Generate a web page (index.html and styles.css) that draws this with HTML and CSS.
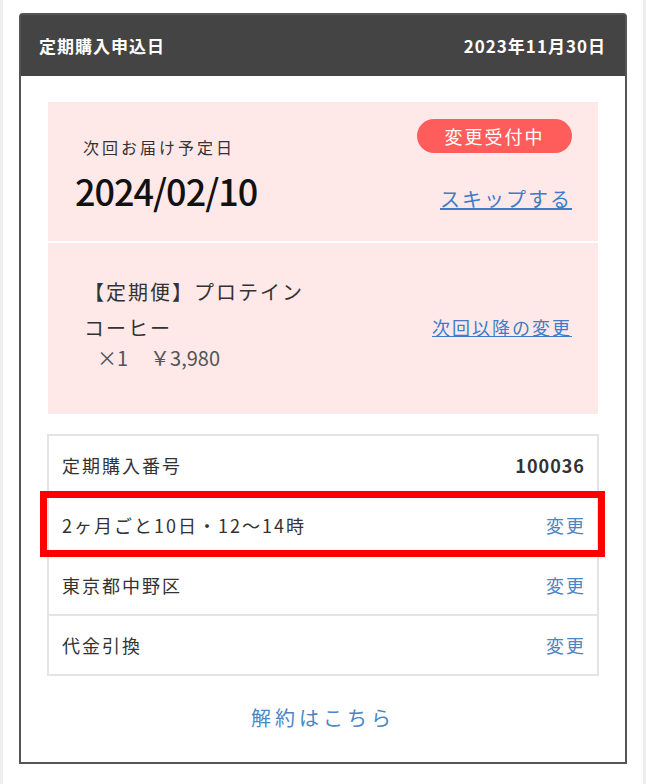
FILE: index.html
```html
<!DOCTYPE html>
<html lang="ja">
<head>
    <meta charset="UTF-8">
    <meta name="viewport" content="width=device-width, initial-scale=1.0">
    <title>定期購入</title>
    <link rel="stylesheet" href="styles.css">
</head>
<body>
    <div class="page">
        <div class="card">
            <div class="card-head">
                <span>定期購入申込日</span>
                <span>2023年11月30日</span>
            </div>
            <div class="card-body">
                <div class="next">
                    <div class="next-main">
                        <p class="next-label">次回お届け予定日</p>
                        <p class="next-date">2024/02/10</p>
                    </div>
                    <div class="next-side">
                        <span class="badge">変更受付中</span>
                        <a class="link" href="#">スキップする</a>
                    </div>
                </div>

                <div class="item">
                    <div class="item-text">
                        <p class="item-name">【定期便】プロテインコーヒー</p>
                        <p class="item-qty">×1<span class="item-price">￥3,980</span></p>
                    </div>
                    <a class="link link-small" href="#">次回以降の変更</a>
                </div>

                <ul class="info">
                    <li><span>定期購入番号</span><b>100036</b></li>
                    <li class="marked"><span>2ヶ月ごと10日・12〜14時</span><a href="#">変更</a></li>
                    <li><span>東京都中野区</span><a href="#">変更</a></li>
                    <li><span>代金引換</span><a href="#">変更</a></li>
                </ul>

                <a class="cancel" href="#">解約はこちら</a>
            </div>
        </div>
    </div>
</body>
</html>
```

FILE: styles.css
```css
body {
    margin: 0;
    font-family: "Noto Sans CJK JP", "Noto Sans", sans-serif;
    color: #333;
    background-color: #fff;
}
p {
    margin: 0;
}
.page {
    min-height: 100vh;
    box-sizing: border-box;
    border-left: 3px solid #eee;
    border-right: 3px solid #eee;
    padding: 13px 16px 0 16px;
}
.card {
    border: 2px solid #555;
    border-radius: 4px 4px 0 0;
}
.card-head {
    display: flex;
    justify-content: space-between;
    align-items: center;
    height: 61px;
    padding: 0 19px 0 18px;
    background-color: #444;
    color: #fff;
    font-size: 17px;
    font-weight: bold;
    letter-spacing: 1px;
}
.card-body {
    padding: 26px 27px 30px 27px;
}
.next {
    display: flex;
    justify-content: space-between;
    height: 139px;
    box-sizing: border-box;
    padding: 17px 26px 0 27px;
    background-color: #ffe8e8;
}
.next-main {
    padding-top: 18px;
}
.next-label {
    padding-left: 8px;
    font-size: 16px;
    line-height: 20px;
    letter-spacing: 3px;
}
.next-date {
    margin-top: 11px;
    font-size: 36px;
    line-height: 44px;
    font-weight: 500;
    letter-spacing: -1px;
    color: #111;
}
.next-side {
    display: flex;
    flex-direction: column;
    align-items: flex-end;
}
.badge {
    display: inline-block;
    width: 155px;
    height: 34px;
    line-height: 34px;
    border-radius: 17px;
    background-color: #ff5c5c;
    color: #fff;
    font-size: 18px;
    letter-spacing: 2px;
    text-align: center;
}
.link {
    margin-top: 32px;
    color: #3d7cc9;
    font-size: 20px;
    line-height: 28px;
    letter-spacing: 2px;
}
.item {
    display: flex;
    justify-content: space-between;
    align-items: center;
    margin-top: 2px;
    padding: 31px 26px 44px 36px;
    background-color: #ffe8e8;
}
.item-text {
    width: 240px;
}
.item-name {
    font-size: 20px;
    line-height: 36px;
    letter-spacing: 2px;
}
.item-qty {
    padding-left: 13px;
    font-size: 20px;
    line-height: 24px;
    color: #555;
}
.item-price {
    margin-left: 22px;
}
.link-small {
    margin-top: 10px;
    font-size: 18px;
    letter-spacing: 2px;
}
.info {
    list-style: none;
    margin: 20px -1px 0 -1px;
    padding: 0;
    border: 2px solid #e4e4e4;
}
.info li {
    display: flex;
    justify-content: space-between;
    align-items: center;
    height: 58px;
    padding: 0 11px 0 13px;
    border-top: 2px solid #e4e4e4;
    font-size: 18px;
    letter-spacing: 2px;
}
.info li:first-child {
    border-top: none;
}
.info b {
    letter-spacing: 1px;
    padding-right: 1px;
}
.info a {
    color: #4a86c5;
    text-decoration: none;
}
.marked {
    position: relative;
}
.marked::after {
    content: "";
    position: absolute;
    top: -5px;
    bottom: -3px;
    left: -9px;
    right: -8px;
    border: 7px solid #f00;
}
.cancel {
    display: block;
    margin-top: 28px;
    text-align: center;
    color: #4a86c5;
    font-size: 20px;
    line-height: 28px;
    letter-spacing: 4px;
    text-decoration: none;
}
```
